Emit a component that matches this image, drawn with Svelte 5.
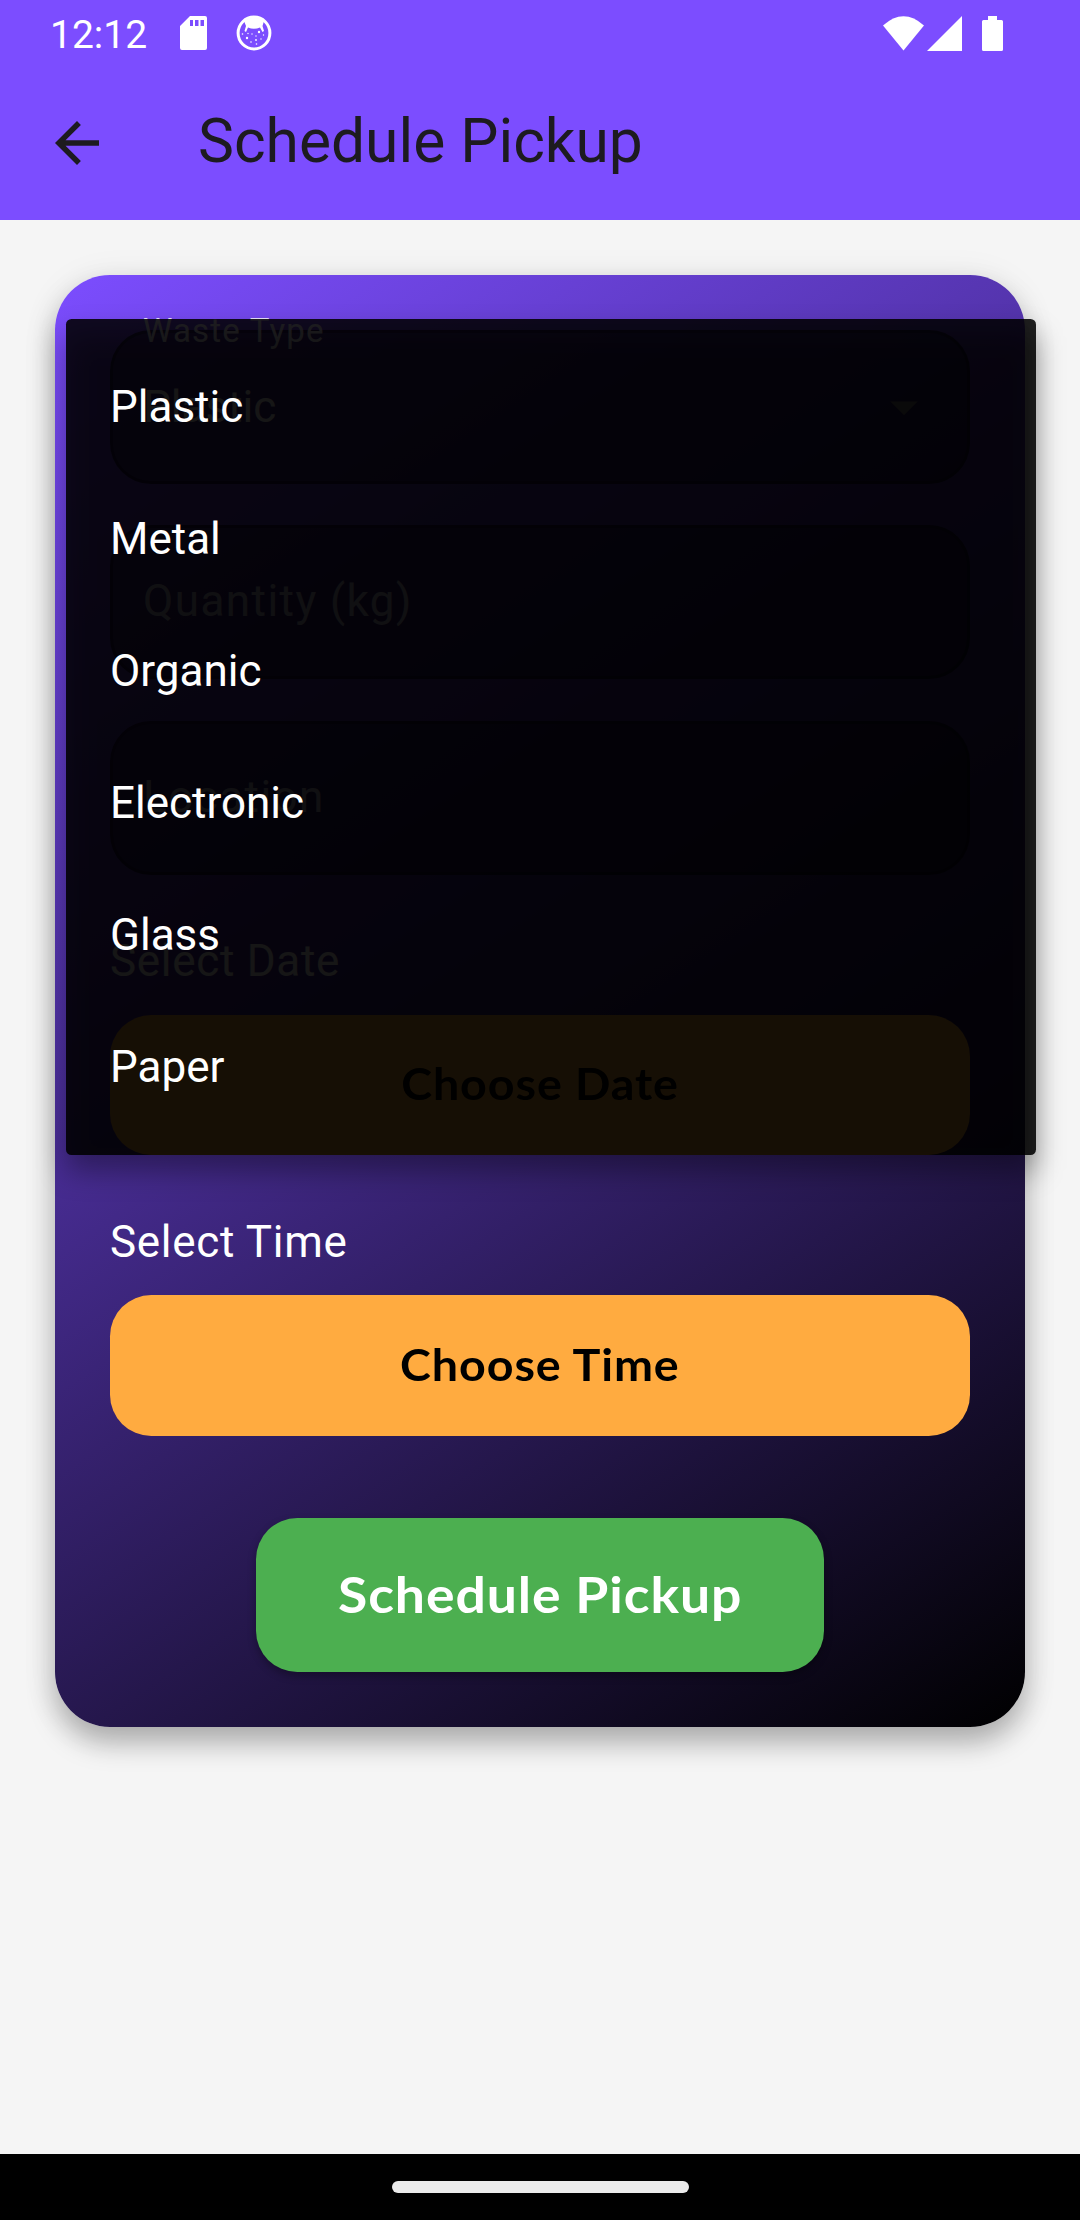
<script lang="ts">
  const options: string[] = ['Plastic', 'Metal', 'Organic', 'Electronic', 'Glass', 'Paper'];
  const selected: string = options[0];
</script>

<div class="screen">
  <header class="top">
    <div class="status">
      <span class="clock">12:12</span>
      <svg class="sd" viewBox="0 0 27 34"><path fill="#fff" fill-rule="evenodd" d="M10 0H25Q27 0 27 2V32Q27 34 25 34H2Q0 34 0 32V10ZM10 4V10H13V4ZM15 4V10H18.5V4ZM20.5 4V10H24V4Z" /></svg>
      <svg class="cat" viewBox="0 0 36 36">
        <circle cx="18" cy="18" r="15.900" fill="none" stroke="#fff" stroke-width="3" />
        <path fill="#fff" d="M8 6Q18 -1 28 6L26.500 11L28 16L26.500 17L24 12.500Q18 15 12 12.500L10 17L8.500 16L10 11Z" />
        <g fill="#fff"><circle cx="11" cy="23" r="1.200" /><circle cx="16" cy="19" r=".7" /><circle cx="23" cy="17" r="1.200" /><circle cx="27.500" cy="20" r=".7" /><circle cx="20" cy="21" r=".7" /><circle cx="20" cy="25" r=".9" /><circle cx="25" cy="24" r=".7" /><circle cx="15" cy="27" r=".8" /><circle cx="20.500" cy="29" r=".8" /><circle cx="6.500" cy="19" r=".8" /><circle cx="12" cy="18.500" r=".7" /></g>
      </svg>
      <span class="grow"></span>
      <svg class="wifi" viewBox="0 0 41 35"><path fill="#fff" d="M0 9.500Q20.500 -9 41 9.500L20.500 34.500Z" /></svg>
      <svg class="signal" viewBox="0 0 35 35"><path fill="#fff" d="M0 35L35 0V35Z" /></svg>
      <svg class="battery" viewBox="0 0 21 35"><path fill="#fff" d="M6 0H15V4H19.500Q21 4 21 5.500V33.500Q21 35 19.500 35H1.500Q0 35 0 33.500V5.500Q0 4 1.500 4H6Z" /></svg>
    </div>
    <div class="appbar">
      <svg class="back" viewBox="0 0 24 24"><path fill="#1d1b20" d="M20 11H7.830l5.590-5.590L12 4l-8 8 8 8 1.410-1.410L7.830 13H20v-2z" /></svg>
      <h1>Schedule Pickup</h1>
    </div>
  </header>

  <main>
    <section class="card">
      <div class="field">
        <span class="float">Waste Type</span>
        <span class="value">{selected}</span>
        <svg class="caret" viewBox="0 0 24 24"><path fill="#777" d="M7 10l5 5 5-5z" /></svg>
      </div>
      <div class="field"><span class="hint">Quantity (kg)</span></div>
      <div class="field"><span class="hint">Location</span></div>
      <div class="label date">Select Date</div>
      <button class="choose"><span>Choose Date</span></button>
      <div class="label">Select Time</div>
      <button class="choose"><span>Choose Time</span></button>
      <button class="submit"><span>Schedule Pickup</span></button>
    </section>

    <div class="menu">
      {#each options as option}
        <div class="option">{option}</div>
      {/each}
    </div>
  </main>

  <footer><span class="pill"></span></footer>
</div>

<style>
  :global(body) { margin: 0; background: #f5f5f5; }
  .screen {
    width: 1080px; height: 2220px; display: flex; flex-direction: column;
    background: #f5f5f5; font-family: Roboto, "Liberation Sans", sans-serif; overflow: hidden;
  }
  .top { height: 220px; background: #7c4dff; flex: none; }
  .status { height: 66px; padding: 0 77px 0 50px; box-sizing: border-box; display: flex; align-items: center; }
  .clock { color: #fff; font-size: 39px; line-height: 66px; width: 130px; padding-top: 3px; }
  .sd { width: 27px; height: 34px; }
  .cat { width: 36px; height: 36px; margin-left: 29px; }
  .grow { flex: 1; }
  .wifi { width: 41px; height: 35px; }
  .signal { width: 35px; height: 35px; margin-left: 3px; }
  .battery { width: 21px; height: 35px; margin-left: 20px; }
  .appbar { height: 154px; display: flex; align-items: center; padding-left: 44px; }
  .back { width: 66px; height: 66px; }
  h1 { margin: 0 0 0 88px; font-weight: 400; font-size: 60.5px; line-height: 77px; color: #1d1b20; white-space: nowrap; padding-bottom: 3px; }
  main { flex: 1; padding: 55px; position: relative; }
  .card {
    height: 1452px; box-sizing: border-box; padding: 55px; border-radius: 55px;
    background: linear-gradient(146.240deg, #7c4dff, #000);
    box-shadow: 0 16px 28px rgba(0, 0, 0, 0.27), 0 4px 36px rgba(0, 0, 0, 0.08);
    display: flex; flex-direction: column;
  }
  .field {
    height: 154px; flex: none; margin-bottom: 41.250px; box-sizing: border-box; border-radius: 41px;
    background: rgba(0, 0, 0, 0.4); border: 3px solid rgba(0, 0, 0, 0.3); padding: 0 30px;
    display: flex; align-items: center; justify-content: space-between; position: relative;
    color: #fff; font-size: 44px;
  }
  .float {
    position: absolute; left: 30px; top: -22px; font-size: 33px; line-height: 39px;
    letter-spacing: 1.200px; color: rgba(255, 255, 255, 0.85); white-space: nowrap;
  }
  .hint { letter-spacing: 1.450px; color: rgba(255, 255, 255, 0.7); padding-bottom: 2px; }
  .caret { width: 66px; height: 66px; }
  .label { color: #fff; font-size: 44px; line-height: 66px; letter-spacing: 0.700px; margin: 54px 0 20.250px; flex: none; }
  .date { margin: 12px 0 21px; }
  button { border: 0; padding: 0 0 3px; font-family: Lato, "Open Sans", sans-serif; font-weight: 700; flex: none; letter-spacing: 0.850px; }
  button span { display: inline-block; transform: scaleX(1.06); }
  .choose { height: 140.250px; border-radius: 41.250px; background: #ffab40; color: #000; font-size: 44px; }
  .submit {
    width: 568px; height: 154px; margin: 82.500px auto 0; border-radius: 41.250px;
    background: #4caf50; color: #fff; font-size: 49.500px; box-shadow: 0 4px 8px rgba(0, 0, 0, 0.3);
  }
  .submit span { transform: scaleX(1.08); }
  .menu {
    position: absolute; z-index: 1; left: 66px; top: 99px; width: 970px; height: 836px; box-sizing: border-box;
    padding: 22px 0; border-radius: 5.500px; background: rgba(0, 0, 0, 0.867);
  }
  /* Soft shadow also shows through the translucent menu surface. */
  .menu::before {
    content: ""; position: absolute; z-index: -1; inset: 16px 0 -16px; border-radius: 5.500px;
    background: rgba(0, 0, 0, 0.35); filter: blur(14px);
  }
  .option { height: 132px; line-height: 132px; padding-left: 44px; color: #fff; font-size: 44px; }
  footer { height: 66px; background: #000; flex: none; display: flex; justify-content: center; align-items: center; }
  .pill { width: 297px; height: 12px; border-radius: 6px; background: #ebebeb; }
</style>
